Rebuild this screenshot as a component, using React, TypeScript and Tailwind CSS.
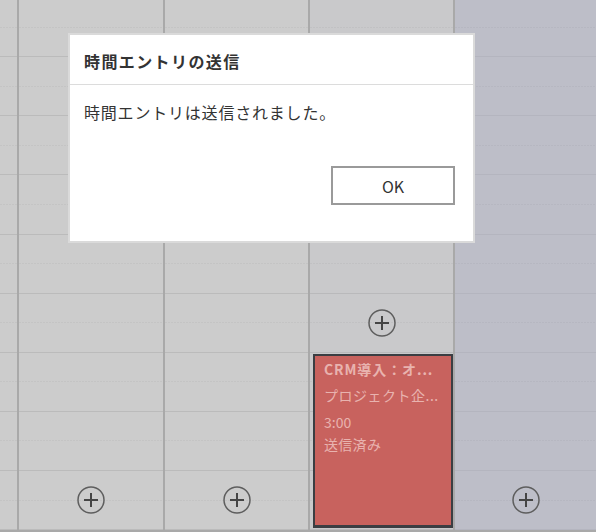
import React from "react";

type Col = {
  key: string;
  width: string;
  bg: string;
  line: string;
  dot: string;
  plusRow: number | null;
  card?: boolean;
};

const cols: Col[] = [
  { key: "c0", width: "w-[17px]", bg: "bg-[#cccccc]", line: "border-[#bbbbbb]", dot: "bg-[repeating-linear-gradient(90deg,#c4c4c4_0_2px,transparent_2px_3px)]", plusRow: null },
  { key: "c1", width: "w-[144px]", bg: "bg-[#cccccc]", line: "border-[#bbbbbb]", dot: "bg-[repeating-linear-gradient(90deg,#c4c4c4_0_2px,transparent_2px_3px)]", plusRow: 8 },
  { key: "c2", width: "w-[143px]", bg: "bg-[#cccccc]", line: "border-[#bbbbbb]", dot: "bg-[repeating-linear-gradient(90deg,#c4c4c4_0_2px,transparent_2px_3px)]", plusRow: 8 },
  { key: "c3", width: "w-[143px]", bg: "bg-[#c9c9cb]", line: "border-[#b9b9bb]", dot: "bg-[repeating-linear-gradient(90deg,#c1c1c3_0_2px,transparent_2px_3px)]", plusRow: 5, card: true },
  { key: "c4", width: "flex-1", bg: "bg-[#bdbec8]", line: "border-[#b4b5bf]", dot: "bg-[repeating-linear-gradient(90deg,#b6b7c1_0_2px,transparent_2px_3px)]", plusRow: 8 },
];

function PlusIcon() {
  return (
    <svg width="28" height="28" viewBox="0 0 28 28">
      <circle cx="14" cy="14" r="13" fill="none" stroke="#5e5e5e" strokeWidth="1.5" />
      <line x1="7" y1="14" x2="21" y2="14" stroke="#454545" strokeWidth="2" />
      <line x1="14" y1="7" x2="14" y2="21" stroke="#454545" strokeWidth="2" />
    </svg>
  );
}

function Column({ col }: { col: Col }) {
  const rows = Array.from({ length: 9 }, (_, i) => i);
  return (
    <div className={`${col.width} ${col.bg} relative flex flex-col shrink-0 h-[532px] overflow-hidden`}>
      <div className="flex flex-col mt-[-2px]">
        {rows.map((r) => (
          <div key={r} className={`relative h-[59.125px] shrink-0 flex flex-col border-b ${col.line}`}>
            <div className="h-[28.5px] shrink-0" />
            <div className={`h-px shrink-0 ${col.dot}`} />
            <div className="flex-1" />
            {col.plusRow === r && (
              <div className="absolute inset-0 flex items-center justify-center">
                <PlusIcon />
              </div>
            )}
          </div>
        ))}
        <div className="h-[2px] bg-[#a9a9a9] shrink-0" />
      </div>
      {col.card && (
        <div className="absolute left-[3px] top-[354px] w-[141px] h-[174px] bg-[#c8625e] border-2 border-r-[3px] border-b-[3px] border-[#3b3e43] pl-[9px] text-[#e8b3af] font-['Noto_Sans_CJK_JP',sans-serif]">
          <div className="pt-[3px] leading-[20px] text-[14px] font-bold tracking-[0.9px] whitespace-nowrap">CRM導入：オ...</div>
          <div className="mt-[5px] leading-[22px] text-[14px] tracking-[0.5px] whitespace-nowrap">プロジェクト企...</div>
          <div className="mt-[5px] leading-[22px] text-[14px] whitespace-nowrap">3:00</div>
          <div className="leading-[22px] text-[14px] tracking-[0.3px] whitespace-nowrap">送信済み</div>
        </div>
      )}
    </div>
  );
}

export default function App() {
  return (
    <div className="relative w-[596px] h-[532px] overflow-hidden bg-[#cccccc] font-['Noto_Sans_CJK_JP',sans-serif]">
      <div className="flex h-[532px]">
        {cols.map((c, i) => (
          <React.Fragment key={c.key}>
            {i > 0 && <div className="w-[2px] shrink-0 bg-[#a9a9a9]" />}
            <Column col={c} />
          </React.Fragment>
        ))}
      </div>

      <div className="absolute left-[68px] top-[33px] w-[407px] h-[210px] bg-white border-2 border-[#dadada] flex flex-col text-[#333333]">
        <div className="h-[50px] shrink-0 border-b border-[#dcdcdc] pl-[14px] pt-[14px]">
          <div className="text-[16px] leading-[24px] font-bold tracking-[1.4px]">時間エントリの送信</div>
        </div>
        <div className="pl-[14px] pt-[15px]">
          <div className="text-[16px] leading-[24px] tracking-[0.8px]">時間エントリは送信されました。</div>
        </div>
        <div className="flex justify-end pr-[18px] mt-[42px]">
          <button className="w-[124px] h-[39px] border-2 border-[#9a9a9a] bg-white text-[16px] text-[#333333] flex items-center justify-center font-['Noto_Sans_CJK_JP',sans-serif]">
            OK
          </button>
        </div>
      </div>
    </div>
  );
}
